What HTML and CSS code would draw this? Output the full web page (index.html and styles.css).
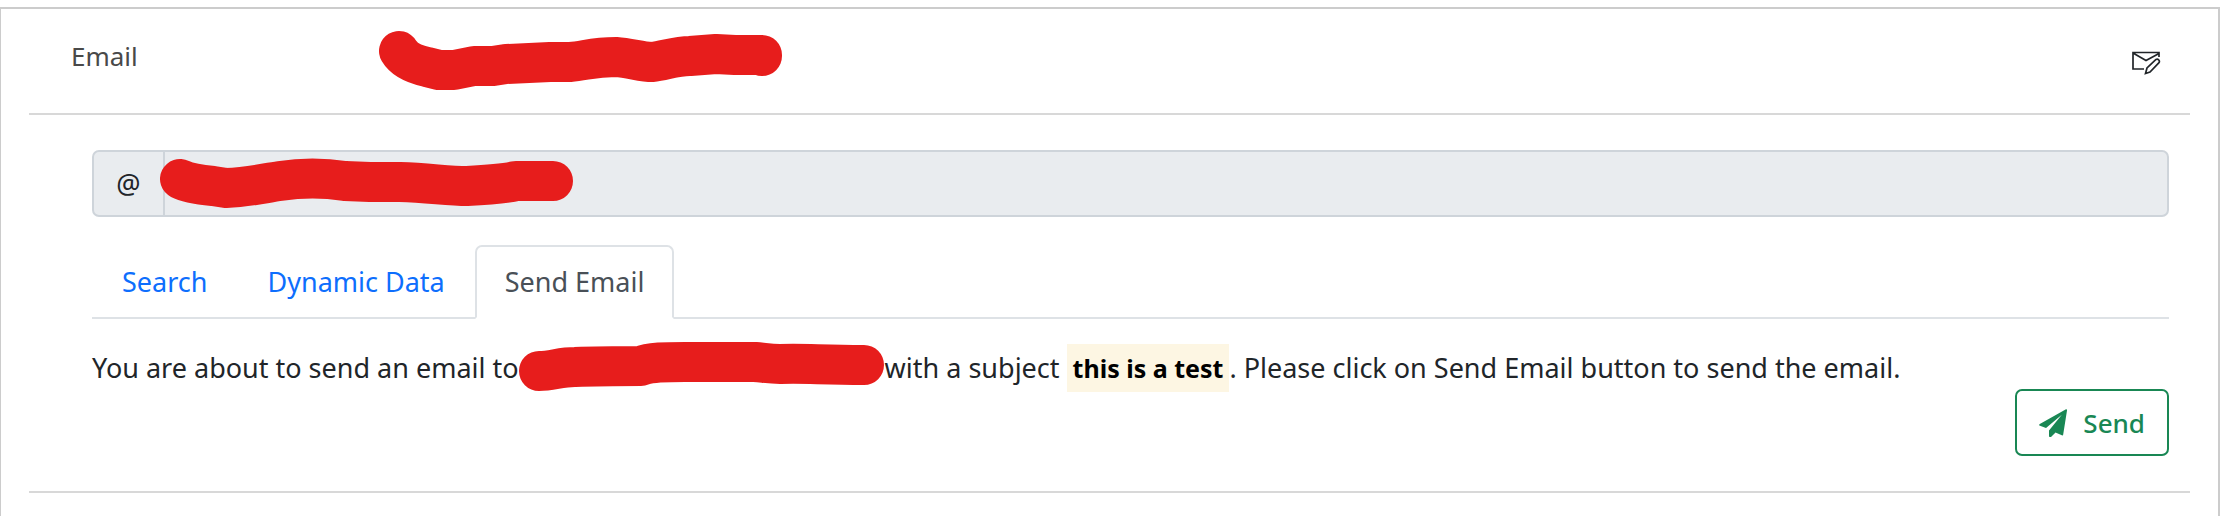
FILE: index.html
```html
<!DOCTYPE html>
<html lang="en">
<head>
<meta charset="utf-8">
<title>Email</title>
<link rel="stylesheet" href="styles.css">
</head>
<body>
<main class="panel">
  <section class="row summary">
    <span class="summary-label">Email</span>
    <svg class="redaction summary-value" width="406" height="62" viewBox="377 29 406 62" aria-hidden="true"><path d="M399 51C405 61 418 65 427 67L439 70H454L474 66H493L506 64L550 62H570C585 61 592 57 616 57C630 58 642 62 652 62C664 61 675 56 690 56L716 54L735 55H762V56"/></svg>
    <button class="icon-button" type="button" aria-label="Edit email">
      <svg width="30" height="26" viewBox="0 0 30 26" fill="none" stroke="#212529" stroke-width="1.7"><path d="M13 19H2V2.500H28V7M2 3L15 10.500L28 3.500"/><path d="M14.500 23.500L16 18L25 9.500Q26.500 8.500 27.800 10Q29 11.500 27.800 12.800L19 22Z"/></svg>
    </button>
  </section>
  <section class="row editor">
    <div class="input-group">
      <label class="addon" for="address">@</label>
      <input class="address" id="address" type="text" disabled>
      <svg class="redaction input-mark" width="414" height="50" viewBox="160 158 414 50" aria-hidden="true"><path d="M180 179C188 183 203 185 213 186L226 188C250 187 265 183 280 181C300 178 325 178 345 181L370 182H400C430 183 448 186 467 186C488 185 504 184 516 181H553"/></svg>
    </div>
    <nav class="tabs">
      <a class="tab" href="#search">Search</a>
      <a class="tab" href="#dynamic">Dynamic Data</a>
      <a class="tab active" href="#send" aria-current="page">Send Email</a>
    </nav>
    <p class="message">You are about to send an email to<svg class="redaction" width="366" height="50" viewBox="519 343 366 50" aria-hidden="true"><path d="M539 372C552 372 560 368 575 368C600 367 620 367 641 367C650 363 665 363 685 363H755C766 364 770 365 780 365C805 364 820 366 864 366"/></svg>with a subject <mark class="subject">this is a test</mark>. Please click on Send Email button to send the email.</p>
    <div class="actions">
      <button class="send" type="button">
        <svg width="28" height="28" viewBox="0 0 28 28" fill="#198754" aria-hidden="true"><path d="M27 .2Q28.200 0 28 1.500L24.200 25.500Q24 26.800 22.800 26.300L16.500 23.600L12 28Q10 28.800 10 26.500V21.500L22.800 5.800L7 19L1 16.800Q-.6 16 .8 15Z"/></svg>
        <span>Send</span>
      </button>
    </div>
  </section>
</main>
</body>
</html>
```
FILE: styles.css
```css
* {
  box-sizing: border-box;
}

body {
  display: flex;
  min-height: 100vh;
  margin: 0;
  padding: 7px 2px 0 0;
  background: #fff;
  color: #212529;
  font-family: "Noto Sans", "Open Sans", sans-serif;
  font-size: 27px;
  font-weight: 400;
  line-height: 42px;
}

.panel {
  flex: 1;
  padding: 0 28px;
  border: 2px solid #ccc;
  border-left-width: 1px;
  border-bottom: 0;
}

.row {
  border-bottom: 2px solid #d8d8d8;
}

.summary {
  display: grid;
  grid-template-columns: 306px 1fr auto;
  align-items: start;
  padding: 20px 29px 22px 42px;
}

.summary-label {
  padding-top: 6px;
  color: #494949;
  font-size: 26px;
}

.redaction {
  fill: none;
  stroke: #e71d1c;
  stroke-width: 40px;
  stroke-linecap: round;
  stroke-linejoin: round;
}

.icon-button {
  display: flex;
  margin-top: 21px;
  padding: 0;
  border: 0;
  background: none;
}

.editor {
  padding: 35px 21px 35px 63px;
}

.input-group {
  position: relative;
  display: flex;
  height: 67px;
  border: 2px solid #ced4da;
  border-radius: 7px;
  background: #e9ecef;
}

.addon {
  display: grid;
  place-items: center;
  width: 71px;
  border-right: 2px solid #ced4da;
}

.address {
  flex: 1;
  min-width: 0;
  border: 0;
  background: transparent;
  font: inherit;
}

.input-mark {
  position: absolute;
  top: 6px;
  left: 66px;
}

.tabs {
  display: flex;
  margin-top: 28px;
  border-bottom: 2px solid #dee2e6;
}

.tab {
  margin-bottom: -2px;
  padding: 14px 28px;
  border: 2px solid transparent;
  border-radius: 7px 7px 0 0;
  color: #0d6efd;
  text-decoration: none;
}

.active {
  border-color: #dee2e6 #dee2e6 #fff;
  background: #fff;
  color: #495057;
}

.message {
  margin: 28px 0 0;
}

.message .redaction {
  height: 50px;
  margin: -12px 0 -4px;
  vertical-align: middle;
}

.subject {
  padding: 7px 6px;
  background: #fdf6e3;
  color: #000;
  font-size: 25px;
  font-weight: 700;
}

.actions {
  display: flex;
  justify-content: flex-end;
}

.send {
  display: flex;
  align-items: center;
  gap: 16px;
  height: 67px;
  padding: 0 22px;
  border: 2px solid #198754;
  border-radius: 7px;
  background: #fff;
  color: #198754;
  font: inherit;
  font-size: 26px;
  font-weight: 500;
}
```
